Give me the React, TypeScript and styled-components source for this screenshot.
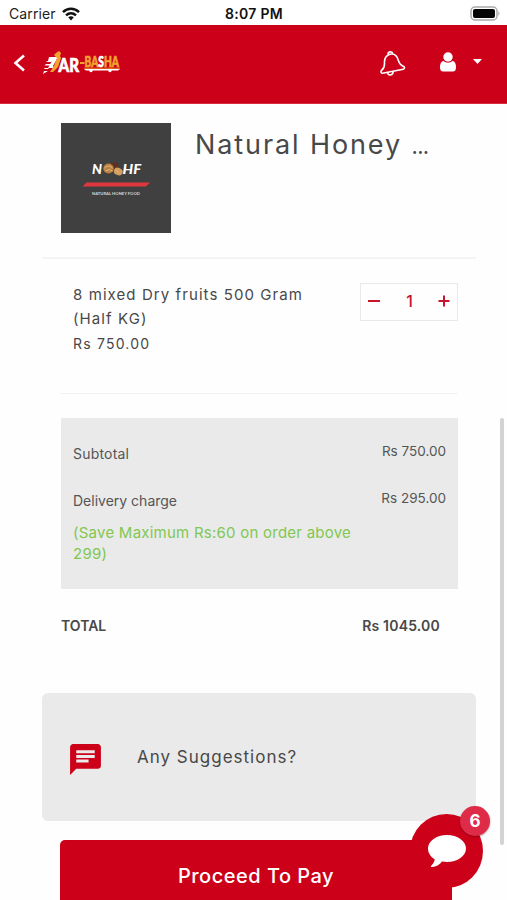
import React from "react";
import styled, { createGlobalStyle } from "styled-components";

const GlobalStyle = createGlobalStyle`
  * { box-sizing: border-box; }
  body { margin: 0; background: #fefefe; overflow: hidden; }
  svg { display: block; flex: none; }
`;

const RED = "#cd0019";

const Screen = styled.div`
  position: relative;
  width: 507px;
  height: 900px;
  overflow: hidden;
  display: flex;
  flex-direction: column;
  background: #fefefe;
  color: #484848;
  font-family: Inter, "Open Sans", sans-serif;
`;

const StatusBar = styled.div`
  height: 25px;
  flex: none;
  display: grid;
  grid-template-columns: 1fr auto 1fr;
  align-items: center;
  padding: 2px 6px 0 9px;
  background: #fff;
  color: #222;
`;

const Carrier = styled.div`
  display: flex;
  align-items: center;
  gap: 6px;
  font-size: 14px;
  letter-spacing: 0.1px;
`;

const Clock = styled.div`
  font-size: 14px;
  font-weight: 600;
  color: #111;
  letter-spacing: 0.3px;
  margin-right: 2px;
`;

const BatterySlot = styled.div`
  display: flex;
  justify-content: flex-end;
`;

const Header = styled.header`
  height: 79px;
  flex: none;
  display: flex;
  align-items: center;
  padding: 0 25px 3px 13px;
  background: ${RED};
  border-bottom: 1px solid #d62d40;
`;

const HeaderActions = styled.div`
  margin-left: auto;
  display: flex;
  align-items: center;
  padding-top: 3px;
`;

const Logo = styled.div`
  margin-left: 17px;
`;

const Account = styled.div`
  display: flex;
  align-items: center;
  gap: 17px;
  margin: -5px 0 0 34px;
`;

const Store = styled.section`
  display: flex;
  gap: 24px;
  height: 155px;
  flex: none;
  margin: 0 31px 0 42px;
  padding: 19px 0 0 19px;
  border-bottom: 2px solid #f4f4f4;
`;

const Label = styled.div<{ $size: number; $line: number; $spacing?: number; $weight?: number; $color?: string }>`
  margin: 0;
  font-size: ${(p) => p.$size}px;
  line-height: ${(p) => p.$line}px;
  letter-spacing: ${(p) => p.$spacing ?? 0}px;
  font-weight: ${(p) => p.$weight ?? 400};
  color: ${(p) => p.$color ?? "inherit"};
  white-space: nowrap;
`;

const Ellipsis = styled.span`
  font-size: 22px;
  letter-spacing: -0.7px;
`;

const Item = styled.section`
  display: flex;
  justify-content: space-between;
  align-items: flex-start;
  height: 135px;
  flex: none;
  margin: 0 49px 0 60px;
  padding: 24px 0 0 13px;
  border-bottom: 1px solid #f2f2f2;
`;

const Stepper = styled.div`
  width: 98px;
  height: 38px;
  display: flex;
  align-items: center;
  justify-content: space-between;
  padding: 0 7px 2px 6px;
  border: 1px solid #e9e9e9;
  color: #c9142c;
`;

const Summary = styled.section`
  height: 171px;
  flex: none;
  margin: 24px 49px 0 61px;
  padding: 25px 12px 0;
  background: #eaeaea;
`;

const Charge = styled.div`
  display: flex;
  justify-content: space-between;
  align-items: flex-start;
  height: 47px;
  color: #555;
  &:nth-child(2) { height: 33px; }
`;

const ChargeName = styled.div`
  padding-top: 1px;
`;

const Total = styled.section`
  display: flex;
  justify-content: space-between;
  align-items: center;
  height: 24px;
  flex: none;
  margin: 25px 67px 0 61px;
`;

const Suggestions = styled.section`
  display: flex;
  align-items: center;
  gap: 33px;
  height: 128px;
  flex: none;
  margin: 55px 31px 0 42px;
  padding-left: 25px;
  border-radius: 6px;
  background: #eaeaea;
  svg { margin-top: 5px; }
`;

const PayButton = styled.button`
  display: flex;
  justify-content: center;
  align-items: flex-start;
  height: 60px;
  flex: none;
  margin: 19px 55px 0 60px;
  padding: 21px 0 0;
  border: 0;
  border-radius: 5px 5px 0 0;
  background: ${RED};
  color: #fff;
  font-family: inherit;
`;

const ChatBubble = styled.div`
  position: absolute;
  left: 410px;
  top: 814px;
  width: 73px;
  height: 74px;
  border-radius: 50%;
  background: ${RED};
  display: flex;
  align-items: center;
  justify-content: center;
`;

const Badge = styled.div`
  position: absolute;
  right: -7px;
  top: -8px;
  width: 30px;
  height: 30px;
  border-radius: 50%;
  background: #de2b47;
  box-shadow: 0 1px 2px rgba(70, 0, 10, 0.45);
  color: #fff;
  font: 700 17px/30px Inter, sans-serif;
  text-align: center;
`;

const ScrollThumb = styled.div`
  position: absolute;
  left: 500px;
  top: 418px;
  width: 4px;
  height: 427px;
  border-radius: 2px;
  background: #d3d3d3;
`;

const WifiIcon = () => (
  <svg width="18" height="14" viewBox="0 0 18 14" fill="none" stroke="#111" strokeWidth="2.5">
    <path d="M1 5.2C5.6.7 12.4.7 17 5.2" />
    <path d="M4 8.4c3-2.8 7-2.8 10 0" />
    <path d="M6.2 10.3c1.7-1.4 3.9-1.4 5.6 0L9 13.4z" fill="#111" stroke="none" />
  </svg>
);

const BatteryIcon = () => (
  <svg width="31" height="15" viewBox="0 0 31 15">
    <rect x="1" y="1" width="26" height="13" rx="4" fill="#fff" stroke="#aaa" strokeWidth="1.5" />
    <rect x="3" y="3" width="22" height="9" rx="2" fill="#050505" />
    <path d="M28.5 5q2 2.500 0 5z" fill="#999" />
  </svg>
);

const BackIcon = () => (
  <svg width="13" height="18" viewBox="0 0 13 18" fill="none" stroke="#fff" strokeWidth="2.6">
    <path d="M11 1.500 2.500 9l8.500 7.500" />
  </svg>
);

const BrandLogo = () => (
  <svg width="78" height="24" viewBox="0 0 78 24" fontFamily="Lato, sans-serif" fontWeight="900">
    <path d="M6 6h9l-5 9 1 2H5l4-7H5zM4 10h5l-1 1H3zM3 13h5l-1 1.500H1.500zM2 17h4l-1 1H.5zM1 20h4l-5 3z" fill="#fff" />
    <path d="m13 2 3-2 2 2-1 3 1 2-3 9-5 5H7l4-6 3-8-3-3z" fill="#f1a32e" />
    <text
      transform="translate(15.5 20.5) scale(.8 1)"
      fontSize="19"
      fill="#fff"
      stroke="#fff"
      strokeWidth=".7"
    >
      AR
    </text>
    <path d="M37 11h4.500v2H37z" fill="#f1a32e" />
    <text
      transform="translate(41.5 16) scale(.68 1)"
      fontSize="15"
      fill="#f1a32e"
      stroke="#f1a32e"
      strokeWidth=".7"
    >
      BA<tspan fill="#fff" stroke="#fff">S</tspan>HA
    </text>
    <path d="M41 18h36l-2 1.500H43z" fill="#fff" />
    <path d="M41 17.200h36" stroke="#f1a32e" strokeWidth=".8" />
    <circle cx="48" cy="19.500" r="1.700" fill="#fff" />
    <circle cx="67" cy="19.500" r="1.700" fill="#fff" />
  </svg>
);

const BellIcon = () => (
  <svg width="26" height="26" viewBox="0 0 26 26" fill="none" stroke="#fff" strokeWidth="1.6" strokeLinejoin="round">
    <path d="M10 3.200C5.400 4.500 4.200 7.500 4.500 12c.2 4-.8 5.600-3 7.400-.9.8-.5 3 1 2.900l20.800-4c1.400-.3 1.600-2.400.4-2.800-3-1-4.400-2.800-5.400-6.200-1.200-4.600-3.800-7-8.300-6.100Z" />
    <path d="M8 3.800c-.2-3.400 4-4 4.900-1M7.500 21.500c.5 3.600 5.600 3.200 5.600-.9" />
  </svg>
);

const UserIcon = () => (
  <svg width="16" height="20" viewBox="0 0 16 20" fill="#fff">
    <circle cx="8" cy="5" r="4.700" />
    <path d="M3.700 8.900C6.200 11.200 9.800 11.200 12.300 8.900 15 9.200 16 11.600 16 15.200c0 2.800-1 4.300-3 4.300H3c-2 0-3-1.500-3-4.300 0-3.600 1-6 3.700-6.300Z" />
  </svg>
);

const CaretIcon = () => (
  <svg width="9" height="5" viewBox="0 0 9 5" fill="#fff">
    <path d="M0 0h9L4.500 5z" />
  </svg>
);

const StoreThumb = () => (
  <svg width="110" height="110" viewBox="0 0 110 110" fontFamily="Lato, sans-serif">
    <rect width="110" height="110" fill="#404041" />
    <g fill="#fff" fontSize="13.500" fontWeight="900" fontStyle="italic">
      <text x="31" y="51" textLength="10" lengthAdjust="spacingAndGlyphs">N</text>
      <text x="61.500" y="51" textLength="18.500" lengthAdjust="spacingAndGlyphs">HF</text>
    </g>
    <ellipse cx="53" cy="43" rx="4.500" ry="3.500" fill="#5e3020" />
    <ellipse cx="47.500" cy="45.500" rx="5.200" ry="5" fill="#b98245" />
    <ellipse cx="57" cy="48.500" rx="4.500" ry="3.600" fill="#d49e5c" transform="rotate(25 57 49)" />
    <path d="M43.500 45q4-4 8 0m-7 3q4-3 7 0m3-1 4 3" stroke="#e2b679" fill="none" />
    <path d="M25.500 59.500H89l-4 4H21.500z" fill="#e0373e" />
    <text x="31" y="71.500" fontSize="3.800" fontWeight="900" fill="#ccc" textLength="48" lengthAdjust="spacingAndGlyphs">NATURAL HONEY FOOD</text>
  </svg>
);

const MinusIcon = () => (
  <svg width="14" height="14" viewBox="0 0 14 14" stroke="currentColor" strokeWidth="2">
    <path d="M1 7h12" />
  </svg>
);

const PlusIcon = () => (
  <svg width="12" height="12" viewBox="0 0 12 12" stroke="currentColor" strokeWidth="2">
    <path d="M0.500 6h11M6 .5v11" />
  </svg>
);

const MessageIcon = () => (
  <svg width="37" height="37" viewBox="0 0 24 24" fill={RED}>
    <path d="M20 2H4c-1.100 0-1.990.9-1.990 2L2 22l4-4h14c1.100 0 2-.9 2-2V4c0-1.100-.9-2-2-2zM6 9h12v2H6V9zm8 5H6v-2h8v2zm4-6H6V6h12v2z" />
  </svg>
);

const SpeechIcon = () => (
  <svg width="38" height="33" viewBox="0 0 38 33" fill="#fff">
    <path d="M19 0c10.500 0 19 6 19 13.500S29.500 27 19 27c-1.700 0-3.400-.2-5-.5C11.500 30 7.500 32.300 3.500 32c-.7 0-.8-.8-.3-1.300 2-2 3.300-4 3.500-6.500C2.600 21.800 0 17.900 0 13.500 0 6 8.500 0 19 0Z" />
  </svg>
);

export default function App() {
  return (
    <>
      <GlobalStyle />
      <Screen>
        <StatusBar>
          <Carrier>Carrier <WifiIcon /></Carrier>
          <Clock>8:07 PM</Clock>
          <BatterySlot><BatteryIcon /></BatterySlot>
        </StatusBar>
        <Header>
          <BackIcon />
          <Logo><BrandLogo /></Logo>
          <HeaderActions>
            <BellIcon />
            <Account><UserIcon /><CaretIcon /></Account>
          </HeaderActions>
        </Header>
        <Store>
          <StoreThumb />
          <Label as="h1" $size={27} $line={44} $spacing={1.9}>Natural Honey <Ellipsis>...</Ellipsis></Label>
        </Store>
        <Item>
          <div>
            <Label $size={15} $line={24.4} $spacing={1.08}>8 mixed Dry fruits 500 Gram</Label>
            <Label $size={15} $line={24.4} $spacing={1.1}>(Half KG)</Label>
            <Label $size={14} $line={24.4} $spacing={1.2}>Rs 750.00</Label>
          </div>
          <Stepper>
            <MinusIcon />
            <Label $size={16} $line={20} $weight={500}>1</Label>
            <PlusIcon />
          </Stepper>
        </Item>
        <Summary>
          <Charge>
            <ChargeName><Label $size={14} $line={20} $spacing={0.2}>Subtotal</Label></ChargeName>
            <Label $size={13.5} $line={17}>Rs 750.00</Label>
          </Charge>
          <Charge>
            <ChargeName><Label $size={14} $line={20} $spacing={0}>Delivery charge</Label></ChargeName>
            <Label $size={13.5} $line={17}>Rs 295.00</Label>
          </Charge>
          <Label $size={15} $line={20.5} $spacing={0.24} $color="#81c750">(Save Maximum Rs:60 on order above</Label>
          <Label $size={15} $line={20.5} $spacing={0.24} $color="#81c750">299)</Label>
        </Summary>
        <Total>
          <Label $size={14} $line={24} $weight={600}>TOTAL</Label>
          <Label $size={14} $line={24} $spacing={0.2} $weight={600}>Rs 1045.00</Label>
        </Total>
        <Suggestions>
          <MessageIcon />
          <Label $size={17} $line={24} $spacing={1}>Any Suggestions?</Label>
        </Suggestions>
        <PayButton>
          <Label $size={20} $line={30} $spacing={0.5} $weight={500}>Proceed To Pay</Label>
        </PayButton>
        <ScrollThumb />
        <ChatBubble>
          <SpeechIcon />
          <Badge>6</Badge>
        </ChatBubble>
      </Screen>
    </>
  );
}
